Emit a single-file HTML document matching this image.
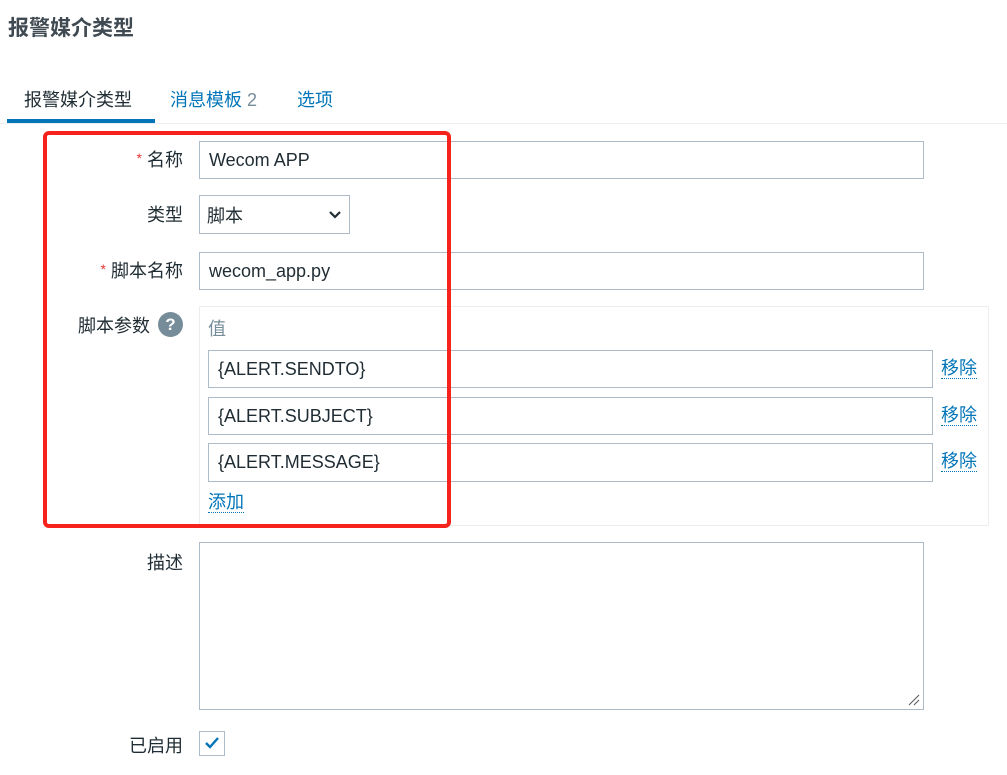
<!DOCTYPE html>
<html><head><meta charset="utf-8"><style>
body{margin:0;width:1007px;height:775px;background:#fff;font-family:"Liberation Sans","Noto Sans CJK SC",sans-serif;color:#1f2c33;position:relative;overflow:hidden}
.a{position:absolute}
.lbl{position:absolute;right:824px;font-size:18px;color:#1f2c33;white-space:nowrap}
.in{position:absolute;border:1px solid #acbbc7;box-sizing:border-box;font-size:18px;padding-left:9px;display:flex;align-items:center;background:#fff}
.lnk{position:absolute;color:#0275b8;font-size:18px;border-bottom:1px dotted #0275b8;line-height:20px}
.st{color:#e33734;font-size:14px;margin-right:5px;position:relative;top:-3px}
</style></head><body>
<div class="a" style="left:8px;top:12px;font-size:21px;font-weight:bold;color:#3f4a52">报警媒介类型</div>
<div class="a" style="left:24px;top:86px;font-size:18px;color:#1f2c33">报警媒介类型</div>
<div class="a" style="left:170px;top:86px;font-size:18px;color:#0275b8">消息模板 <span style="color:#768d99">2</span></div>
<div class="a" style="left:297px;top:86px;font-size:18px;color:#0275b8">选项</div>
<div class="a" style="left:0;top:123px;width:1007px;height:1px;background:#ebeef0"></div>
<div class="a" style="left:7px;top:119px;width:148px;height:4px;background:#0275b8"></div>

<div class="lbl" style="top:146px"><span class="st">*</span>名称</div>
<div class="in" style="left:199px;top:141px;width:725px;height:38px">Wecom APP</div>
<div class="lbl" style="top:201px">类型</div>
<div class="in" style="left:199px;top:195px;width:151px;height:39px;padding-left:7px">脚本
<svg class="a" style="left:128px;top:14px" width="14" height="10" viewBox="0 0 14 10"><path d="M2 2l5 5 5-5" stroke="#1f2c33" stroke-width="2.2" fill="none"/></svg></div>
<div class="lbl" style="top:257px"><span class="st">*</span>脚本名称</div>
<div class="in" style="left:199px;top:252px;width:725px;height:38px">wecom_app.py</div>
<div class="lbl" style="top:312px;right:857px">脚本参数</div>
<div class="a" style="left:158px;top:312px;width:25px;height:25px;border-radius:50%;background:#768d99;color:#fff;font-weight:bold;font-size:17px;text-align:center;line-height:25px">?</div>
<div class="a" style="left:199px;top:306px;width:790px;height:220px;border:1px solid #ebeef0;box-sizing:border-box"></div>
<div class="a" style="left:208px;top:315px;font-size:18px;color:#768d99">值</div>
<div class="in" style="left:208px;top:350px;width:725px;height:38px">{ALERT.SENDTO}</div>
<div class="lnk" style="left:941px;top:358px">移除</div>
<div class="in" style="left:208px;top:397px;width:725px;height:38px">{ALERT.SUBJECT}</div>
<div class="lnk" style="left:941px;top:405px">移除</div>
<div class="in" style="left:208px;top:443px;width:725px;height:39px">{ALERT.MESSAGE}</div>
<div class="lnk" style="left:941px;top:451px">移除</div>
<div class="lnk" style="left:208px;top:492px">添加</div>
<div class="a" style="left:43px;top:131px;width:408px;height:397px;border:4px solid #f5231b;border-radius:6px;box-sizing:border-box"></div>

<div class="lbl" style="top:549px">描述</div>
<div class="in" style="left:199px;top:542px;width:725px;height:168px"></div>
<svg class="a" style="left:907px;top:693px" width="14" height="14"><path d="M2 12L12 2M7 12L12 7" stroke="#555" stroke-width="1"/></svg>
<div class="lbl" style="top:732px">已启用</div>
<div class="a" style="left:199px;top:731px;width:26px;height:25px;border:1px solid #acbbc7;box-sizing:border-box"></div>
<svg class="a" style="left:203px;top:735px" width="18" height="16"><path d="M3 8l4 4 8-9" stroke="#0275b8" stroke-width="2.4" fill="none"/></svg>
</body></html>
